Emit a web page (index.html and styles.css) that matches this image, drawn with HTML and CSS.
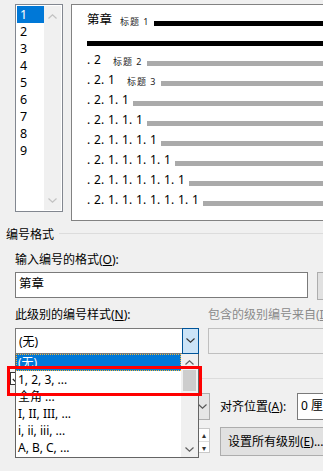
FILE: index.html
```html
<!DOCTYPE html>
<html lang="zh-CN">
<head>
  <meta charset="UTF-8" />
  <title>定义多级列表</title>
  <link rel="stylesheet" href="styles.css">
</head>
<body>
  <div class="dialog">
    <div class="top">
      <div class="levels">
        <ul class="level-list">
          <li class="sel">1</li>
          <li>2</li>
          <li>3</li>
          <li>4</li>
          <li>5</li>
          <li>6</li>
          <li>7</li>
          <li>8</li>
          <li>9</li>
        </ul>
        <div class="vscroll">
          <svg width="9" height="5" viewBox="0 0 9 5"><path d="M0.5 4.5 L4.5 0.8 L8.5 4.5" fill="none" stroke="#c2c2c2" stroke-width="1.2"/></svg>
          <svg width="9" height="5" viewBox="0 0 9 5"><path d="M0.5 0.5 L4.5 4.2 L8.5 0.5" fill="none" stroke="#c2c2c2" stroke-width="1.2"/></svg>
        </div>
      </div>
      <div class="preview">
        <div class="pv-row"><span class="pv-num pv-big">第章</span><span class="pv-tag first">标题 1</span><span class="bar dark"></span></div>
        <div class="pv-row"><span class="bar dark"></span></div>
        <div class="pv-row"><span class="pv-num">. 2</span><span class="pv-tag">标题 2</span><span class="bar"></span></div>
        <div class="pv-row"><span class="pv-num">. 2. 1</span><span class="pv-tag">标题 3</span><span class="bar"></span></div>
        <div class="pv-row"><span class="pv-num">. 2. 1. 1</span><span class="bar"></span></div>
        <div class="pv-row"><span class="pv-num">. 2. 1. 1. 1</span><span class="bar"></span></div>
        <div class="pv-row"><span class="pv-num">. 2. 1. 1. 1. 1</span><span class="bar"></span></div>
        <div class="pv-row"><span class="pv-num">. 2. 1. 1. 1. 1. 1</span><span class="bar"></span></div>
        <div class="pv-row"><span class="pv-num">. 2. 1. 1. 1. 1. 1. 1</span><span class="bar"></span></div>
        <div class="pv-row"><span class="pv-num">. 2. 1. 1. 1. 1. 1. 1. 1</span><span class="bar"></span></div>
      </div>
    </div>

    <div class="group-head"><span>编号格式</span><i class="rule"></i></div>

    <div class="section">
      <div class="lbl">输入编号的格式(<u>O</u>):</div>
      <div class="fmt-row">
        <div class="textbox fmt">第章</div>
        <div class="btn font-btn"></div>
      </div>
      <div class="style-grid">
        <div class="lbl">此级别的编号样式(<u>N</u>):</div>
        <div class="lbl off">包含的级别编号来自(<u>I</u>):</div>
        <div class="combo focus">
          <span class="combo-text">(无)</span>
          <span class="drop"><svg width="9" height="5" viewBox="0 0 9 5"><path d="M0.5 0.5 L4.5 4.2 L8.5 0.5" fill="none" stroke="#333" stroke-width="1.1"/></svg></span>
        </div>
        <div class="combo disabled"></div>
      </div>
    </div>

    <div class="pos-head"><span class="check"><svg width="9" height="8" viewBox="0 0 9 8"><path d="M0.8 4 L3.4 6.6 L8.2 1" fill="none" stroke="#222" stroke-width="1.3"/></svg></span><i class="rule"></i></div>

    <div class="pos-row">
      <div class="btn-combo"><svg width="9" height="5" viewBox="0 0 9 5"><path d="M0.5 0.5 L4.5 4.2 L8.5 0.5" fill="none" stroke="#555" stroke-width="1.1"/></svg></div>
      <div class="lbl">对齐位置(<u>A</u>):</div>
      <div class="textbox unit">0 厘米</div>
    </div>
    <div class="pos-row second">
      <div class="spin">
        <span class="spin-btn">&#9652;</span>
        <span class="spin-btn">&#9662;</span>
      </div>
      <div class="btn all-btn">设置所有级别(<u>E</u>)...</div>
    </div>

    <ul class="popup">
      <li class="sel">(无)</li>
      <li>1, 2, 3, ...</li>
      <li>全角 ...</li>
      <li>I, II, III, ...</li>
      <li>i, ii, iii, ...</li>
      <li>A, B, C, ...</li>
      <li class="popup-scroll">
        <svg width="9" height="5" viewBox="0 0 9 5"><path d="M0.5 4.5 L4.5 0.8 L8.5 4.5" fill="none" stroke="#606060" stroke-width="1.2"/></svg>
        <span class="thumb"></span>
        <span class="track"></span>
        <svg width="9" height="5" viewBox="0 0 9 5"><path d="M0.5 0.5 L4.5 4.2 L8.5 0.5" fill="none" stroke="#606060" stroke-width="1.2"/></svg>
      </li>
    </ul>

    <div class="mark"></div>
  </div>
</body>
</html>
```

FILE: styles.css
```css
* {
  box-sizing: border-box;
}
body {
  margin: 0;
  background: #f0f0f0;
  font-family: "Noto Sans", "Noto Sans CJK SC", sans-serif;
  font-size: 12px;
  color: #000;
}
u {
  text-decoration: underline;
  text-underline-offset: 1px;
}
.dialog {
  position: relative;
  width: 323px;
  height: 471px;
  overflow: hidden;
}

/* level list + preview */
.top {
  display: flex;
  align-items: flex-start;
  gap: 8px;
  padding: 4px 0 0 15px;
}
.levels {
  display: flex;
  flex: none;
  width: 48px;
  height: 208px;
  border: 1px solid #828790;
  background: #fff;
}
.level-list {
  flex: 1;
  list-style: none;
  margin: 0;
  padding: 1px 0 1px 1px;
  font-size: 12.5px;
}
.level-list li {
  height: 17px;
  line-height: 17px;
  padding-left: 3px;
}
.level-list .sel {
  background: #0078d7;
  color: #fff;
}
.vscroll {
  display: flex;
  flex-direction: column;
  justify-content: space-between;
  align-items: center;
  width: 17px;
  margin: 1px 1px 1px 0;
  padding: 8px 0 7px;
  background: #f0f0f0;
}
.vscroll svg {
  display: block;
}
.preview {
  flex: none;
  width: 262px;
  height: 217px;
  border: 1px solid #828282;
  background: #fff;
  padding: 2px 0 0 15px;
}
.pv-row {
  display: flex;
  align-items: flex-end;
  height: 20px;
}
.pv-num {
  font-size: 12px;
  line-height: 14px;
  letter-spacing: 0.27px;
  white-space: pre;
  margin-right: 4px;
}
.pv-big {
  font-size: 12.5px;
  letter-spacing: 0;
  margin-right: 0;
}
.pv-tag {
  font-size: 9px;
  line-height: 10px;
  letter-spacing: 1px;
  color: #222;
  white-space: pre;
  margin: 0 4px 0 8px;
}
.pv-tag.first {
  margin-left: 8px;
}
.bar {
  flex: 1;
  height: 5px;
  margin-bottom: 1px;
  background: #aaaaaa;
}
.bar.dark {
  background: #000;
}

/* numbering format group */
.group-head {
  display: flex;
  align-items: center;
  margin-top: 6px;
  padding-left: 6px;
  line-height: 16px;
}
.rule {
  flex: 1;
  height: 1px;
  margin: 0 0 3px 5px;
  background: #dcdcdc;
}
.section {
  padding-left: 15px;
}
.lbl {
  line-height: 16px;
  white-space: nowrap;
}
.section > .lbl {
  margin-top: 9px;
}
.fmt-row {
  display: flex;
  align-items: flex-start;
  gap: 9px;
  margin-top: 4px;
}
.textbox {
  flex: none;
  height: 26px;
  border: 1px solid #7a7a7a;
  background: #fff;
  padding-left: 3px;
  line-height: 22px;
  white-space: nowrap;
}
.textbox.fmt {
  width: 293px;
  font-size: 12.5px;
}
.btn {
  flex: none;
  border: 1px solid #adadad;
  background: #e1e1e1;
  text-align: center;
  white-space: nowrap;
}
.font-btn {
  width: 75px;
  height: 28px;
}
.style-grid {
  display: grid;
  grid-template-columns: 184px 140px;
  column-gap: 9px;
  row-gap: 5px;
  margin-top: 7px;
}
.lbl.off {
  color: #8a8a8a;
}
.combo {
  position: relative;
  height: 26px;
  border: 1px solid #7a7a7a;
  background: #fff;
  display: flex;
  align-items: center;
}
.combo-text {
  padding-left: 3px;
}
.drop {
  margin-left: auto;
  width: 17px;
  height: 26px;
  margin-top: -1px;
  margin-right: -1px;
  border: 1px solid #005499;
  background: #cce4f7;
  display: flex;
  align-items: center;
  justify-content: center;
}
.combo.disabled {
  border-color: #bfbfbf;
  background: #f0f0f0;
}

/* position group (mostly hidden under the popup) */
.pos-head {
  display: flex;
  align-items: center;
  margin-top: 18px;
  padding-left: 10px;
}
.check {
  flex: none;
  width: 13px;
  height: 13px;
  border: 1px solid #333;
  background: #fff;
  display: flex;
  align-items: center;
  justify-content: center;
}
.pos-head .rule {
  margin: 0 0 1px 40px;
}
.pos-row {
  display: flex;
  align-items: center;
  margin-top: 8px;
  padding-left: 110px;
}
.btn-combo {
  flex: none;
  width: 100px;
  height: 27px;
  border: 1px solid #adadad;
  background: #e5e5e5;
  display: flex;
  align-items: center;
  justify-content: flex-end;
  padding-right: 2px;
}
.pos-row .lbl {
  flex: none;
  margin-left: 10px;
  width: 77px;
}
.textbox.unit {
  width: 70px;
  height: 27px;
  line-height: 24px;
}
.pos-row.second {
  margin-top: 7px;
  padding-left: 150px;
  align-items: flex-start;
}
.spin {
  flex: none;
  width: 60px;
  height: 25px;
  margin-top: 1px;
  border: 1px solid #c8c8c8;
  background: #fff;
  display: flex;
  flex-direction: column;
  align-items: flex-end;
}
.spin-btn {
  width: 11px;
  height: 11.5px;
  font-size: 8px;
  line-height: 11px;
  text-align: center;
  color: #333;
  border-left: 1px solid #dcdcdc;
}
.spin-btn + .spin-btn {
  border-top: 1px solid #dcdcdc;
}
.all-btn {
  margin-left: 10px;
  width: 120px;
  height: 29px;
  line-height: 27px;
  text-align: left;
  padding-left: 7px;
}

/* dropped-down list of the combo */
.popup {
  position: absolute;
  left: 15px;
  top: 354px;
  width: 184px;
  height: 104px;
  margin: 0;
  padding: 0;
  list-style: none;
  border: 1px solid #646464;
  border-top: none;
  background: #fff;
}
.popup li {
  height: 17px;
  line-height: 17px;
  width: 165px;
  padding-left: 2px;
}
.popup li.sel {
  background: #0078d7;
  color: #fff;
  outline: 1px dotted #f2b53a;
  outline-offset: -1px;
}
.popup .popup-scroll {
  position: absolute;
  right: 0;
  top: 0;
  width: 17px;
  height: 103px;
  padding: 6px 0 5px;
  background: #f0f0f0;
  display: flex;
  flex-direction: column;
  align-items: center;
}
.thumb {
  width: 13px;
  height: 21px;
  margin-top: 5px;
  background: #cdcdcd;
}
.track {
  flex: 1;
}

/* annotation box */
.mark {
  position: absolute;
  left: 7px;
  top: 366px;
  width: 195px;
  height: 30px;
  border: 3px solid #ff0000;
}
```
